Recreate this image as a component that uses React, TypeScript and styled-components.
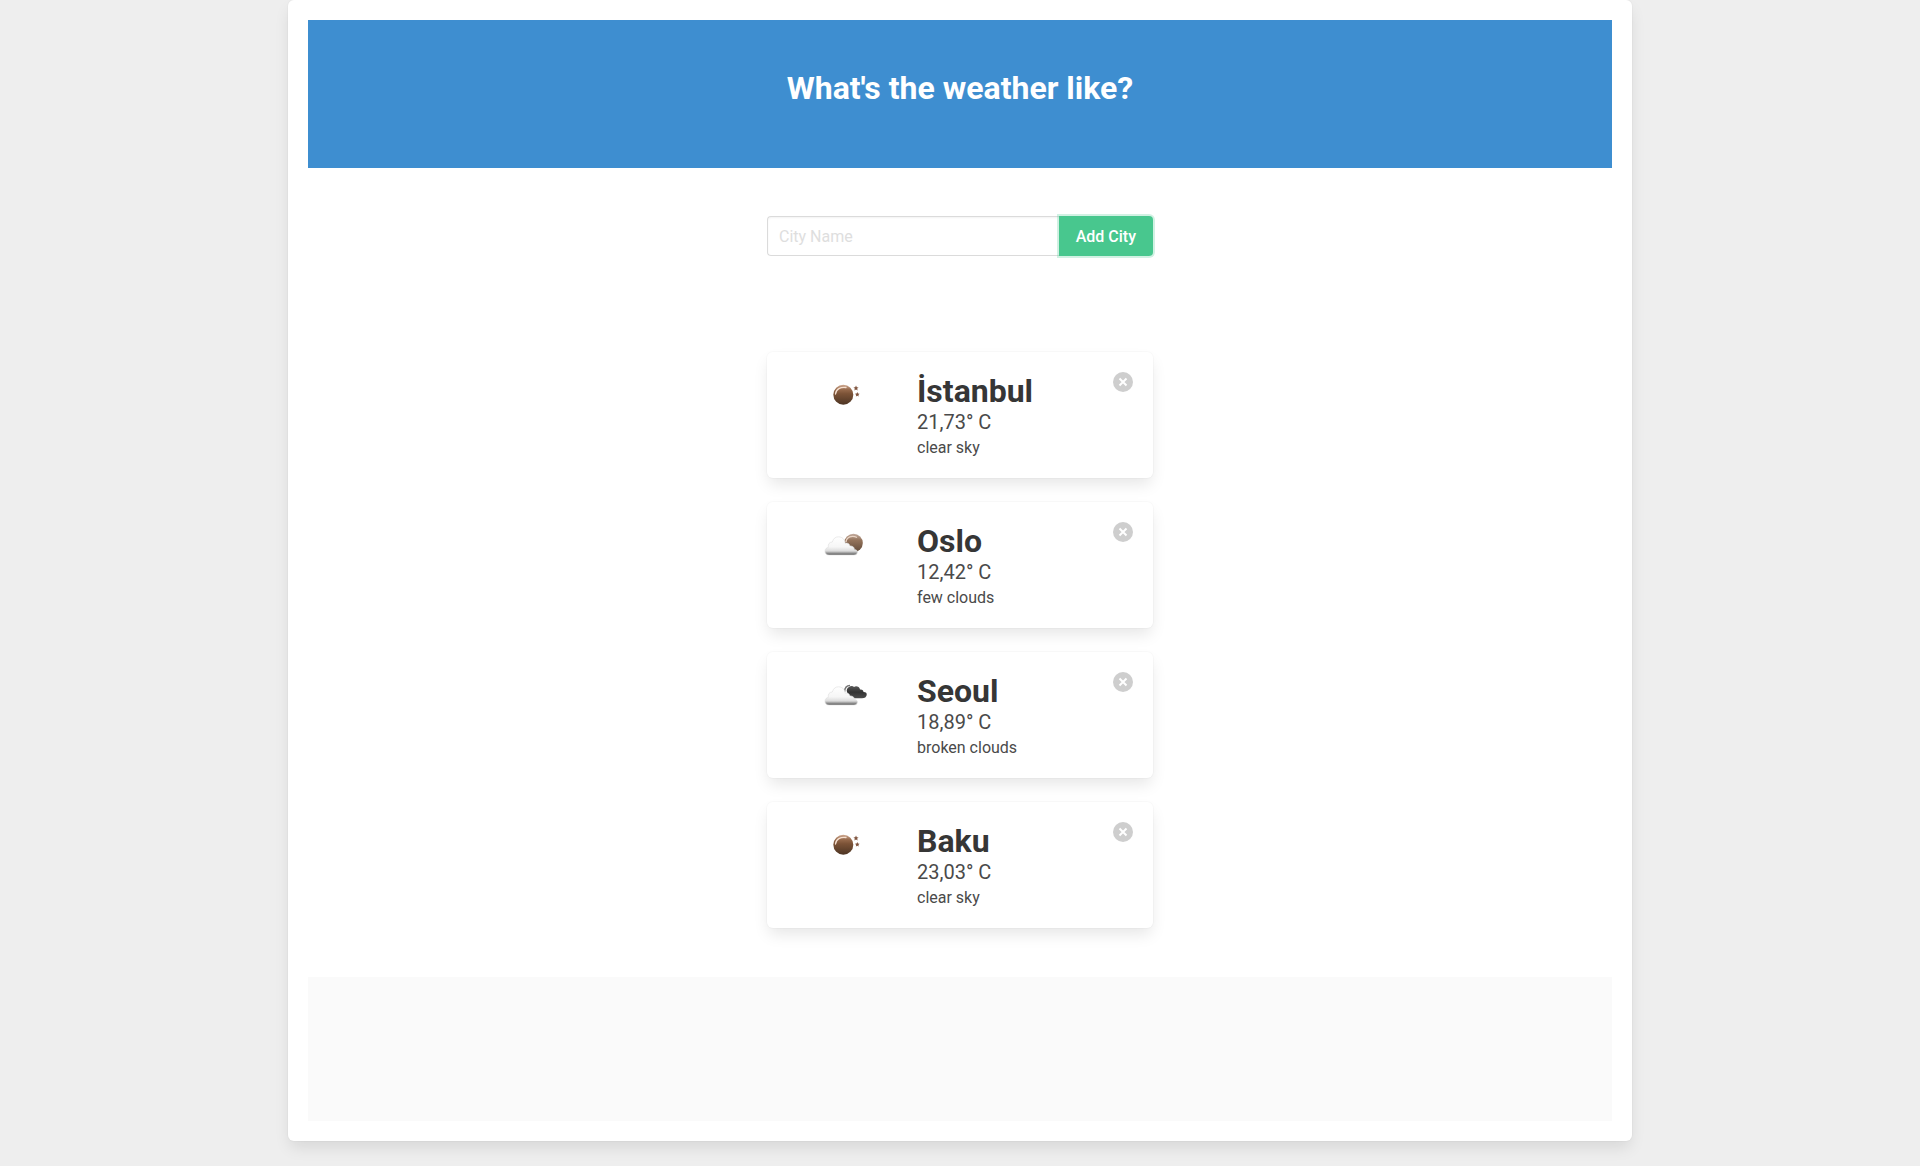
import React, { useState } from "react";
import styled, { createGlobalStyle } from "styled-components";

const GlobalStyle = createGlobalStyle`
  *, *::before, *::after { box-sizing: border-box; }
  html { background: #eee; }
  body {
    margin: 0;
    color: #4a4a4a;
    font: 400 16px/24px Roboto, "Liberation Sans", sans-serif;
  }
  h1, h2, p { margin: 0; }
`;

const Panel = styled.div`
  max-width: 1344px;
  margin: 0 auto 20px;
  padding: 20px;
  background: #fff;
  border-radius: 6px;
  box-shadow: 0 8px 16px -2px rgba(10, 10, 10, 0.1), 0 0 0 1px rgba(10, 10, 10, 0.02);
`;

const Hero = styled.header`
  padding: 50px 24px 62px;
  background: #3e8ed0;
  text-align: center;
`;

const Title = styled.h1`
  color: #fff;
  font-size: 32px;
  font-weight: 700;
  line-height: 36px;
`;

const Content = styled.main`
  max-width: 386px;
  margin: 0 auto;
  padding: 48px 0 49px;
`;

const SearchForm = styled.form`
  display: flex;
  margin-bottom: 96px;
`;

const CityInput = styled.input`
  flex: 1;
  min-width: 0;
  height: 40px;
  padding: 0 11px;
  border: 1px solid #dbdbdb;
  border-right: 0;
  border-radius: 4px 0 0 4px;
  background: #fff;
  box-shadow: inset 0 1px 2px rgba(10, 10, 10, 0.05);
  color: #363636;
  font: inherit;
  outline: none;
  &::placeholder { color: #dedede; opacity: 1; }
`;

const AddButton = styled.button`
  height: 40px;
  padding: 1px 17px 0;
  border: 0;
  border-radius: 0 4px 4px 0;
  background: #48c78e;
  box-shadow: 0 0 0 2px rgba(72, 199, 142, 0.25);
  color: #fff;
  font: inherit;
  font-weight: 500;
  cursor: pointer;
`;

const CityList = styled.div`
  display: grid;
  gap: 24px;
`;

const Card = styled.article`
  display: grid;
  grid-template-columns: 114px 1fr 20px;
  column-gap: 16px;
  align-items: start;
  padding: 20px 20px 16px;
  border-radius: 6px;
  background: #fff;
  box-shadow: 0 8px 16px -2px rgba(10, 10, 10, 0.1), 0 0 0 1px rgba(10, 10, 10, 0.02);
`;

const WeatherArt = styled.svg`
  width: 50px;
  height: 50px;
  justify-self: center;
`;

const CityName = styled.h2`
  color: #363636;
  font-size: 32px;
  font-weight: 700;
  line-height: 38px;
`;

const Temperature = styled.p`
  font-size: 20px;
  line-height: 24px;
`;

const Description = styled.p`
  line-height: 28px;
`;

const DeleteButton = styled.button`
  display: block;
  width: 20px;
  height: 20px;
  padding: 0;
  border: 0;
  border-radius: 50%;
  background: rgba(10, 10, 10, 0.2);
  cursor: pointer;
  svg { display: block; }
`;

const Footer = styled.footer`
  height: 144px;
  background: #fafafa;
`;

type Weather = "clear" | "few" | "broken";

const CLOUD =
  "M10 33c-2.500 0-4-1.500-4-3.800 0-2.200 1.500-3.500 3.300-3.700-.5-3.500 1.200-5.500 4-5.500 1-3.500 3.200-5.200 6.200-5.200 3.800 0 6.300 2.700 6.700 6.400 2.300-.6 4.300.5 4.800 2.800 2.800-.2 4.400 1.200 4.400 3.500 2 .2 3 1 3 2.400 0 1.800-1.400 3.100-3.400 3.100z";

function WeatherIcon({ kind, id }: { kind: Weather; id: string }) {
  return (
    <WeatherArt viewBox="0 0 50 50" role="img" aria-label={kind}>
      <defs>
        <linearGradient id={`sun-${id}`} x1="0" y1="0" x2="0" y2="1">
          <stop offset="0" stopColor="#d0ab93" />
          <stop offset=".25" stopColor="#96694b" />
          <stop offset=".45" stopColor="#7c5337" />
          <stop offset="1" stopColor="#4d3524" />
        </linearGradient>
        <linearGradient id={`haze-${id}`} x1="0" y1="0" x2="0" y2="1">
          <stop offset="0" stopColor="#c4ada0" />
          <stop offset=".35" stopColor="#94735b" />
          <stop offset="1" stopColor="#604a39" />
        </linearGradient>
        <linearGradient id={`cloud-${id}`} x1="0" y1="0" x2="0" y2="1">
          <stop offset="0" stopColor="#fff" />
          <stop offset=".55" stopColor="#f6f6f6" />
          <stop offset=".78" stopColor="#dcdcdc" />
          <stop offset=".86" stopColor="#aaa" />
          <stop offset="1" stopColor="#555" />
        </linearGradient>
        <linearGradient id={`dark-${id}`} x1="0" y1="0" x2="0" y2="1">
          <stop offset="0" stopColor="#5a5a5a" />
          <stop offset=".5" stopColor="#333" />
          <stop offset="1" stopColor="#4c4c4c" />
        </linearGradient>
      </defs>
      {kind === "clear" && (
        <>
          <circle cx="24.300" cy="22.700" r="10" fill={`url(#sun-${id})`} />
          <path d="M16.500 22c.5-5 5-7.200 10.500-6.500" fill="none" stroke="#f6dfcf" strokeWidth="1.300" strokeLinecap="round" />
          <path d="m37 13.500.8 1.700 1.800.2-1.400 1.200.4 1.800-1.600-.9-1.600.9.4-1.800-1.400-1.200 1.800-.2zM38.300 20.100l.7 1.500 1.600.2-1.200 1.100.3 1.600-1.400-.8-1.400.8.3-1.600-1.200-1.100 1.600-.2z" fill="#80553f" />
        </>
      )}
      {kind === "few" && (
        <>
          <circle cx="34.500" cy="21" r="9.300" fill={`url(#haze-${id})`} />
          <path d="M27 20c.5-5 6-7 11-4.500" fill="none" stroke="#ead5c6" strokeWidth="1.300" />
        </>
      )}
      {kind === "broken" && (
        <>
          <path d="M25.500 20c.2-3.500 2-6.500 5.500-6.500" fill="none" stroke="#777" strokeWidth="1.500" />
          <path d="M28 20c-.8-2 .3-4.500 2-5 1.500-1.500 4-1.500 5 0 2-1.500 5.500-.5 6 2.500 2-.5 3.500.8 3.500 2.500 2.500 0 3.500 1.200 3.200 3-.3 2-2 3.300-4.700 3.300h-6c-4 0-7.500-2-9-6.300z" fill={`url(#dark-${id})`} />
        </>
      )}
      {kind !== "clear" && (
        <path d={CLOUD} fill={`url(#cloud-${id})`} stroke="#ddd" strokeWidth=".6" />
      )}
    </WeatherArt>
  );
}

interface City {
  name: string;
  temperature: string;
  description: string;
  kind: Weather;
}

const INITIAL: City[] = [
  { name: "İstanbul", temperature: "21,73", description: "clear sky", kind: "clear" },
  { name: "Oslo", temperature: "12,42", description: "few clouds", kind: "few" },
  { name: "Seoul", temperature: "18,89", description: "broken clouds", kind: "broken" },
  { name: "Baku", temperature: "23,03", description: "clear sky", kind: "clear" },
];

export default function App() {
  const [cities, setCities] = useState(INITIAL);
  return (
    <>
      <GlobalStyle />
      <Panel>
        <Hero>
          <Title>What's the weather like?</Title>
        </Hero>
        <Content>
          <SearchForm onSubmit={(e) => e.preventDefault()}>
            <CityInput type="text" placeholder="City Name" aria-label="City Name" />
            <AddButton type="submit">Add City</AddButton>
          </SearchForm>
          <CityList>
            {cities.map((city) => (
              <Card key={city.name}>
                <WeatherIcon kind={city.kind} id={city.name} />
                <div>
                  <CityName>{city.name}</CityName>
                  <Temperature>{city.temperature}° C</Temperature>
                  <Description>{city.description}</Description>
                </div>
                <DeleteButton
                  type="button"
                  aria-label={`Remove ${city.name}`}
                  onClick={() => setCities(cities.filter((c) => c !== city))}
                >
                  <svg width="20" height="20" viewBox="0 0 20 20" aria-hidden="true">
                    <path d="m6.500 6.500 7 7m0-7-7 7" stroke="#fff" strokeWidth="2" />
                  </svg>
                </DeleteButton>
              </Card>
            ))}
          </CityList>
        </Content>
        <Footer />
      </Panel>
    </>
  );
}
